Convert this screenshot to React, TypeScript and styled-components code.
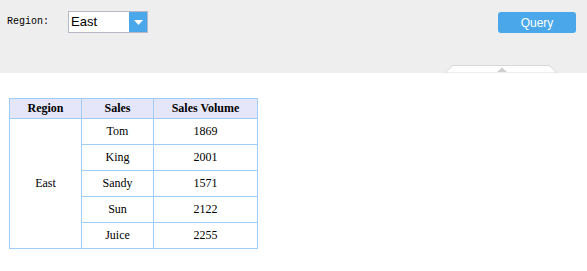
import React from "react";
import styled, { createGlobalStyle } from "styled-components";

const Global = createGlobalStyle`
  html, body { margin: 0; padding: 0; background: #fff; }
  body { font-family: "Liberation Serif", serif; }
`;

const Page = styled.div`
  width: 587px;
  height: 271px;
  overflow: hidden;
  background: #fff;
`;

const Toolbar = styled.div`
  position: relative;
  height: 73px;
  background: #eeeeee;
  display: flex;
  align-items: flex-start;
  padding: 11px 11px 0 7px;
  box-sizing: border-box;
`;

const Label = styled.span`
  font-family: "Liberation Mono", monospace;
  font-size: 10px;
  color: #000;
  line-height: 22px;
  width: 61px;
`;

const Select = styled.div`
  width: 80px;
  height: 22px;
  box-sizing: border-box;
  border: 1px solid #b5b8c8;
  background: #fff;
  display: flex;
`;

const SelectText = styled.span`
  flex: 1;
  font-family: "Liberation Sans", Arial, sans-serif;
  font-size: 13px;
  line-height: 20px;
  padding-left: 2px;
  color: #000;
`;

const Arrow = styled.div`
  width: 18px;
  background: #4aa8ea;
  display: flex;
  align-items: center;
  justify-content: center;
`;

const Spacer = styled.div`
  flex: 1;
`;

const QueryButton = styled.button`
  margin-top: 1px;
  width: 78px;
  height: 21px;
  border: none;
  border-radius: 3px;
  background: #4aa8ea;
  color: #fff;
  font-family: "Liberation Sans", Arial, sans-serif;
  font-size: 12px;
  padding: 0;
  cursor: pointer;
`;

const CollapseTab = styled.svg`
  position: absolute;
  left: 444px;
  bottom: 0;
`;

const Content = styled.div`
  padding: 25px 0 0 9px;
`;

const Table = styled.table`
  border-collapse: collapse;
  font-family: "Liberation Serif", serif;
  font-size: 12px;
  color: #000;
  border: 1px solid #9fcdf7;
`;

const Th = styled.th<{ $w: number }>`
  width: ${(p) => p.$w}px;
  height: 19px;
  padding: 0;
  background: #e6e6fa;
  border: 1px solid #9fcdf7;
  font-weight: bold;
  text-align: center;
`;

const Td = styled.td`
  height: 25px;
  padding: 0;
  border: 1px solid #9fcdf7;
  text-align: center;
`;

const rows = [
  ["Tom", "1869"],
  ["King", "2001"],
  ["Sandy", "1571"],
  ["Sun", "2122"],
  ["Juice", "2255"],
];

export default function App() {
  return (
    <Page>
      <Global />
      <Toolbar>
        <Label>Region:</Label>
        <Select>
          <SelectText>East</SelectText>
          <Arrow>
            <svg width="9" height="5" viewBox="0 0 9 5">
              <path d="M0 0 L9 0 L4.5 5 Z" fill="#fff" />
            </svg>
          </Arrow>
        </Select>
        <Spacer />
        <QueryButton>Query</QueryButton>
        <CollapseTab width="114" height="8" viewBox="0 0 114 8">
          <path d="M0.5 8 L9 0.5 L105 0.5 L113.5 8 Z" fill="#fff" stroke="#d8d8d8" />
          <path d="M53 7 L58 2.5 L63 7 Z" fill="#cfcfcf" />
        </CollapseTab>
      </Toolbar>
      <Content>
        <Table>
          <thead>
            <tr>
              <Th $w={71}>Region</Th>
              <Th $w={71}>Sales</Th>
              <Th $w={103}>Sales Volume</Th>
            </tr>
          </thead>
          <tbody>
            {rows.map((r, i) => (
              <tr key={r[0]}>
                {i === 0 && <Td rowSpan={5}>East</Td>}
                <Td>{r[0]}</Td>
                <Td>{r[1]}</Td>
              </tr>
            ))}
          </tbody>
        </Table>
      </Content>
    </Page>
  );
}
